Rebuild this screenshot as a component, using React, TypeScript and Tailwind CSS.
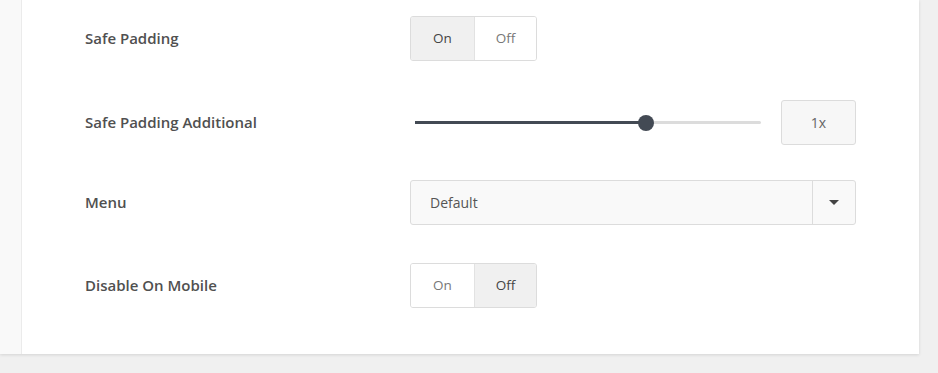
import React from "react";

function Toggle({ active }: { active: "on" | "off" }) {
  return (
    <div className="flex w-[127px] h-[45px] rounded-[3px] border border-[#dcdcdc] overflow-hidden text-[13.5px] text-[#777]">
      <div className={`w-[64px] flex items-center justify-center border-r border-[#e2e2e2] ${active === "on" ? "bg-[#f0f0f0] font-medium text-[#444]" : "bg-white"}`}>On</div>
      <div className={`flex-1 flex items-center justify-center ${active === "off" ? "bg-[#f0f0f0] font-medium text-[#444]" : "bg-white"}`}>Off</div>
    </div>
  );
}

function Row({ label, children, className }: { label: string; children: React.ReactNode; className: string }) {
  return (
    <div className={`flex items-center ${className}`}>
      <div className="w-[388px] shrink-0 pl-[63px] text-[15px] font-semibold text-[#505050]">{label}</div>
      {children}
    </div>
  );
}

export default function App() {
  return (
    <div className="w-[938px] h-[373px] bg-[#f0f0f0] overflow-hidden" style={{ fontFamily: '"Open Sans", "Noto Sans", sans-serif' }}>
      <div className="flex w-[919px] h-[354px] shadow-[0_1px_3px_rgba(0,0,0,0.12)]">
        <div className="w-[22px] bg-[#f9f9f9] border-r border-[#ebebeb]" />
        <div className="flex-1 bg-white flex flex-col">
          <Row label="Safe Padding" className="mt-[16px]">
            <Toggle active="on" />
          </Row>
          <Row label="Safe Padding Additional" className="mt-[39px]">
            <div className="ml-[5px] w-[346px] relative h-[16px] flex items-center">
              <div className="h-[3px] w-full bg-[#dcdcdc] rounded-full" />
              <div className="absolute left-0 h-[3px] w-[231px] bg-[#434a54]" />
              <div className="absolute left-[223px] w-[16px] h-[16px] rounded-full bg-[#434a54]" />
            </div>
            <div className="ml-[20px] w-[75px] h-[45px] rounded-[3px] border border-[#dcdcdc] bg-[#f7f7f7] flex items-center justify-center text-[14px] text-[#666]">1x</div>
          </Row>
          <Row label="Menu" className="mt-[35px]">
            <div className="flex w-[446px] h-[45px] rounded-[3px] border border-[#dcdcdc] bg-[#f9f9f9]">
              <div className="flex-1 flex items-center pl-[19px] text-[14px] text-[#555]">Default</div>
              <div className="w-[43px] border-l border-[#dcdcdc] flex items-center justify-center">
                <svg width="10" height="5" viewBox="0 0 10 5"><path d="M0 0h10L5 5z" fill="#444" /></svg>
              </div>
            </div>
          </Row>
          <Row label="Disable On Mobile" className="mt-[38px]">
            <Toggle active="off" />
          </Row>
        </div>
      </div>
    </div>
  );
}
